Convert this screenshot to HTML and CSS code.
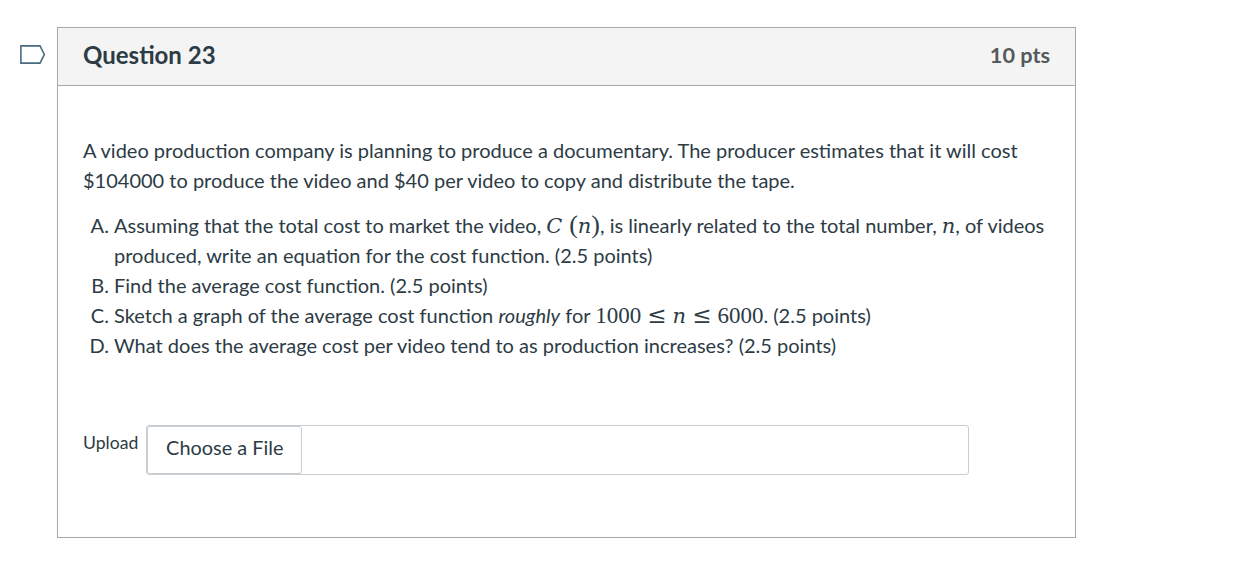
FILE: index.html
```html
<!DOCTYPE html>
<html lang="en">
<head>
    <meta charset="UTF-8">
    <title>Question 23</title>
    <link rel="stylesheet" href="styles.css">
</head>
<body>
    <div class="page">
        <div class="flag">
            <svg width="27" height="19" viewBox="0 0 27 19">
                <path d="M1.9 0.9H21L25.3 9.5L21 18.1H1.9Z" fill="#fff" stroke="#4a6b80" stroke-width="1.6"/>
            </svg>
        </div>
        <div class="question">
            <div class="question-header">
                <h2>Question 23</h2>
                <span class="points">10 pts</span>
            </div>
            <div class="question-body">
                <p>A video production company is planning to produce a documentary. The producer estimates that it will cost $104000 to produce the video and $40 per video to copy and distribute the tape.</p>
                <ol>
                    <li>Assuming that the total cost to market the video, <span class="math"><i>C</i> <span class="paren">(<i>n</i>)</span></span>, is linearly related to the total number, <span class="math"><i>n</i></span>, of videos produced, write an equation for the cost function. (2.5 points)</li>
                    <li>Find the average cost function. (2.5 points)</li>
                    <li>Sketch a graph of the average cost function <em>roughly</em> for <span class="math">1000<span class="rel">≤</span><i>n</i><span class="rel">≤</span>6000</span>. (2.5 points)</li>
                    <li>What does the average cost per video tend to as production increases? (2.5 points)</li>
                </ol>
                <div class="upload">
                    <span class="upload-label">Upload</span>
                    <div class="file-box">
                        <button class="file-btn">Choose a File</button>
                    </div>
                </div>
            </div>
        </div>
    </div>
</body>
</html>
```

FILE: styles.css
```css
body {
    margin: 0;
    font-family: 'Lato', sans-serif;
    color: #2d3b45;
    background: #fff;
}

.page {
    display: flex;
    align-items: flex-start;
    padding: 27px 0 0 19px;
}

.flag {
    width: 38px;
    height: 50px;
    padding-top: 18px;
    box-sizing: border-box;
}

.flag svg {
    display: block;
}

/* Card */
.question {
    width: 1019px;
    height: 511px;
    box-sizing: border-box;
    border: 1px solid #a8a8a8;
}

.question-header {
    display: flex;
    justify-content: space-between;
    align-items: center;
    height: 58px;
    box-sizing: border-box;
    padding: 0 25px;
    background: #f4f4f4;
    border-bottom: 1px solid #a8a8a8;
}

.question-header h2 {
    margin: 0 0 5px;
    font-size: 24px;
    font-weight: 700;
}

.points {
    margin-bottom: 3px;
    font-size: 21.7px;
    font-weight: 700;
    color: #55595c;
}

.question-body {
    padding: 49px 25px 0;
    font-size: 20px;
    line-height: 30px;
}

.question-body p {
    margin: 0 0 15px;
}

.question-body ol {
    list-style: upper-alpha;
    margin: 0;
    padding-left: 31px;
}

/* Math */
.math {
    font-family: 'Liberation Serif', serif;
    font-size: 23px;
    line-height: 0;
}

.math i {
    font-family: 'DejaVu Serif', serif;
    font-size: 21px;
}

.paren {
    margin-left: 1px;
    font-size: 26px;
}

.rel {
    margin: 0 6px;
    font-family: 'DejaVu Serif', serif;
    font-size: 23px;
}

/* Upload */
.upload {
    display: flex;
    align-items: flex-start;
    margin-top: 65px;
}

.upload-label {
    font-size: 17.6px;
    line-height: 36px;
}

.file-box {
    flex: none;
    width: 823px;
    height: 50px;
    margin-left: 8px;
    box-sizing: border-box;
    border: 1px solid #c7cdd1;
    border-radius: 3px;
}

.file-btn {
    display: block;
    height: 48px;
    width: 155px;
    padding: 0 0 6px;
    font-family: inherit;
    font-size: 19.9px;
    color: #2d3b45;
    background: #fff;
    border: 1px solid #c7cdd1;
    border-radius: 3px;
}
```
